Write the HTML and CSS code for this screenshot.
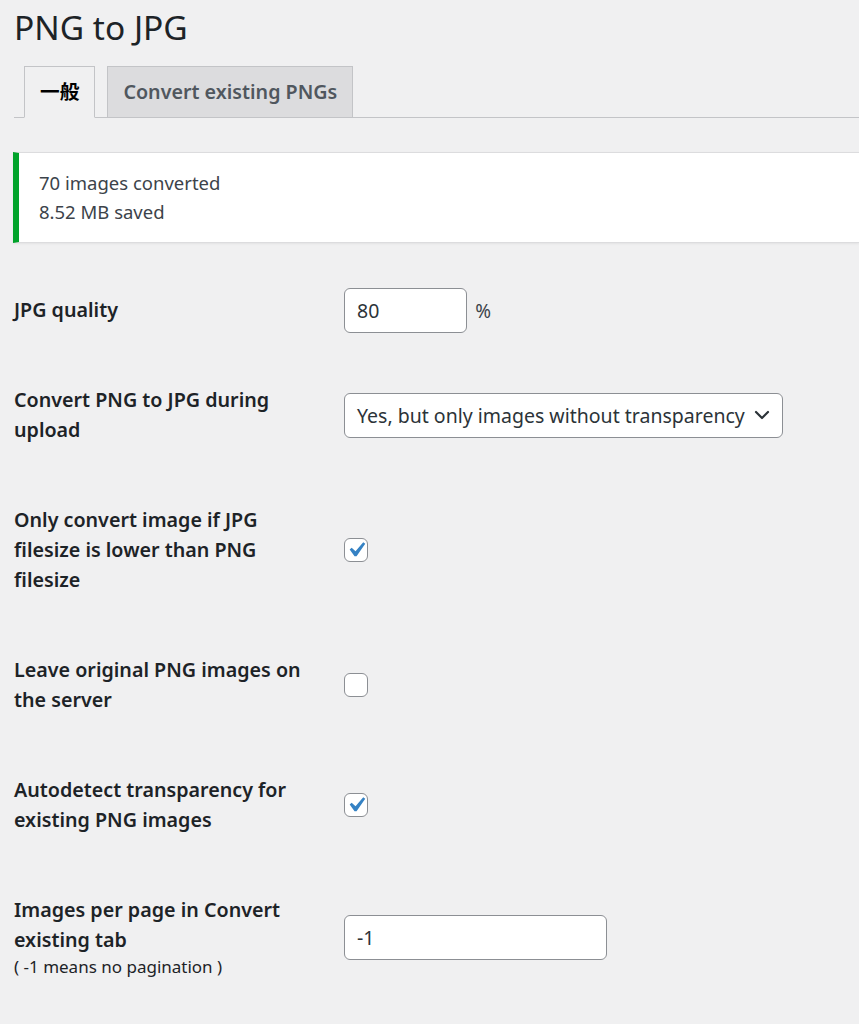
FILE: index.html
```html
<!DOCTYPE html>
<html lang="ja">
<head>
    <meta charset="UTF-8">
    <meta name="viewport" content="width=device-width, initial-scale=1.0">
    <title>PNG to JPG</title>
    <link rel="stylesheet" href="styles.css">
</head>
<body>

    <div class="wrap">
        <h1 class="page-title">PNG to JPG</h1>

        <nav class="nav-tab-wrapper">
            <a href="#" class="nav-tab nav-tab-active">一般</a>
            <a href="#" class="nav-tab">Convert existing PNGs</a>
        </nav>

        <div class="notice notice-success">
            <p>70 images converted</p>
            <p>8.52 MB saved</p>
        </div>

        <table class="form-table">
            <tr>
                <th>JPG quality</th>
                <td>
                    <input type="text" class="small-text" value="80"> <span class="unit">%</span>
                </td>
            </tr>
            <tr>
                <th>Convert PNG to JPG during upload</th>
                <td>
                    <div class="select-box">
                        <span>Yes, but only images without transparency</span>
                        <svg class="chevron" width="16" height="10" viewBox="0 0 16 10">
                            <polyline points="2,2 8,8 14,2" fill="none" stroke="#2c3338" stroke-width="2.2" stroke-linecap="round" stroke-linejoin="round"/>
                        </svg>
                    </div>
                </td>
            </tr>
            <tr>
                <th>Only convert image if JPG filesize is lower than PNG filesize</th>
                <td>
                    <span class="checkbox is-checked">
                        <svg width="30" height="30" viewBox="0 0 20 20"><path d="M14.83 4.89l1.34.94-5.81 8.38H9.02L5.78 9.67l1.34-1.25 2.57 2.4z" fill="#3582c4"/></svg>
                    </span>
                </td>
            </tr>
            <tr>
                <th>Leave original PNG images on the server</th>
                <td>
                    <span class="checkbox"></span>
                </td>
            </tr>
            <tr>
                <th>Autodetect transparency for existing PNG images</th>
                <td>
                    <span class="checkbox is-checked">
                        <svg width="30" height="30" viewBox="0 0 20 20"><path d="M14.83 4.89l1.34.94-5.81 8.38H9.02L5.78 9.67l1.34-1.25 2.57 2.4z" fill="#3582c4"/></svg>
                    </span>
                </td>
            </tr>
            <tr>
                <th>Images per page in Convert existing tab
                    <small class="hint">( -1 means no pagination )</small>
                </th>
                <td>
                    <input type="text" class="regular-text" value="-1">
                </td>
            </tr>
        </table>
    </div>

</body>
</html>
```

FILE: styles.css
```css
body {
    margin: 0;
    background-color: #f0f0f1;
    color: #1d2327;
    font-family: "Noto Sans", "Noto Sans CJK JP", sans-serif;
    overflow-x: hidden;
}
.wrap {
    padding-left: 14px;
}
.page-title {
    margin: 0;
    padding: 4px 0 0;
    font-size: 33.5px;
    font-weight: 400;
    line-height: 46px;
    height: 58px;
}
.nav-tab-wrapper {
    display: flex;
    align-items: flex-end;
    border-bottom: 1px solid #c3c4c7;
    padding-left: 10px;
    height: 55px;
}
.nav-tab {
    display: block;
    margin-right: 12px;
    margin-bottom: -1px;
    padding: 7px 15px 8px;
    font-size: 19.7px;
    font-weight: 600;
    line-height: 35px;
    color: #50575e;
    text-decoration: none;
    background-color: #dcdcde;
    border: 1px solid #c3c4c7;
}
.nav-tab-active {
    color: #000;
    background-color: #f0f0f1;
    border-bottom-color: #f0f0f1;
}
.notice {
    margin: 34px 0 0 -1px;
    padding: 15px 20px 16px;
    background-color: #fff;
    border: 1px solid #dcdcde;
    border-right: none;
    border-left: 6px solid #00a32a;
    box-shadow: 0 1px 2px rgba(0, 0, 0, 0.06);
}
.notice p {
    margin: 0;
    font-size: 18.5px;
    line-height: 29px;
    color: #3c434a;
}
.form-table {
    margin-top: 22px;
    border-collapse: collapse;
}
.form-table th {
    width: 300px;
    padding: 30px 15px 30px 0;
    text-align: left;
    vertical-align: top;
    font-size: 19.7px;
    font-weight: 600;
    line-height: 30px;
}
.form-table td {
    padding: 22px 15px;
    vertical-align: middle;
}
.hint {
    display: block;
    font-size: 17px;
    font-weight: 400;
    line-height: 24px;
}
.small-text,
.regular-text,
.select-box {
    box-sizing: border-box;
    height: 45px;
    padding: 0 12px;
    font-family: inherit;
    font-size: 19.5px;
    color: #2c3338;
    background-color: #fff;
    border: 1px solid #8c8f94;
    border-radius: 6px;
}
.small-text {
    width: 123px;
}
.regular-text {
    width: 263px;
}
.unit {
    margin-left: 4px;
    font-size: 19px;
    color: #3c434a;
}
.select-box {
    display: flex;
    align-items: center;
    justify-content: space-between;
    width: 439px;
    padding-right: 12px;
}
.chevron {
    display: block;
}
.checkbox {
    display: flex;
    align-items: center;
    justify-content: center;
    box-sizing: border-box;
    width: 24px;
    height: 24px;
    background-color: #fff;
    border: 1px solid #8c8f94;
    border-radius: 6px;
}
.checkbox svg {
    display: block;
    flex: none;
}
```
